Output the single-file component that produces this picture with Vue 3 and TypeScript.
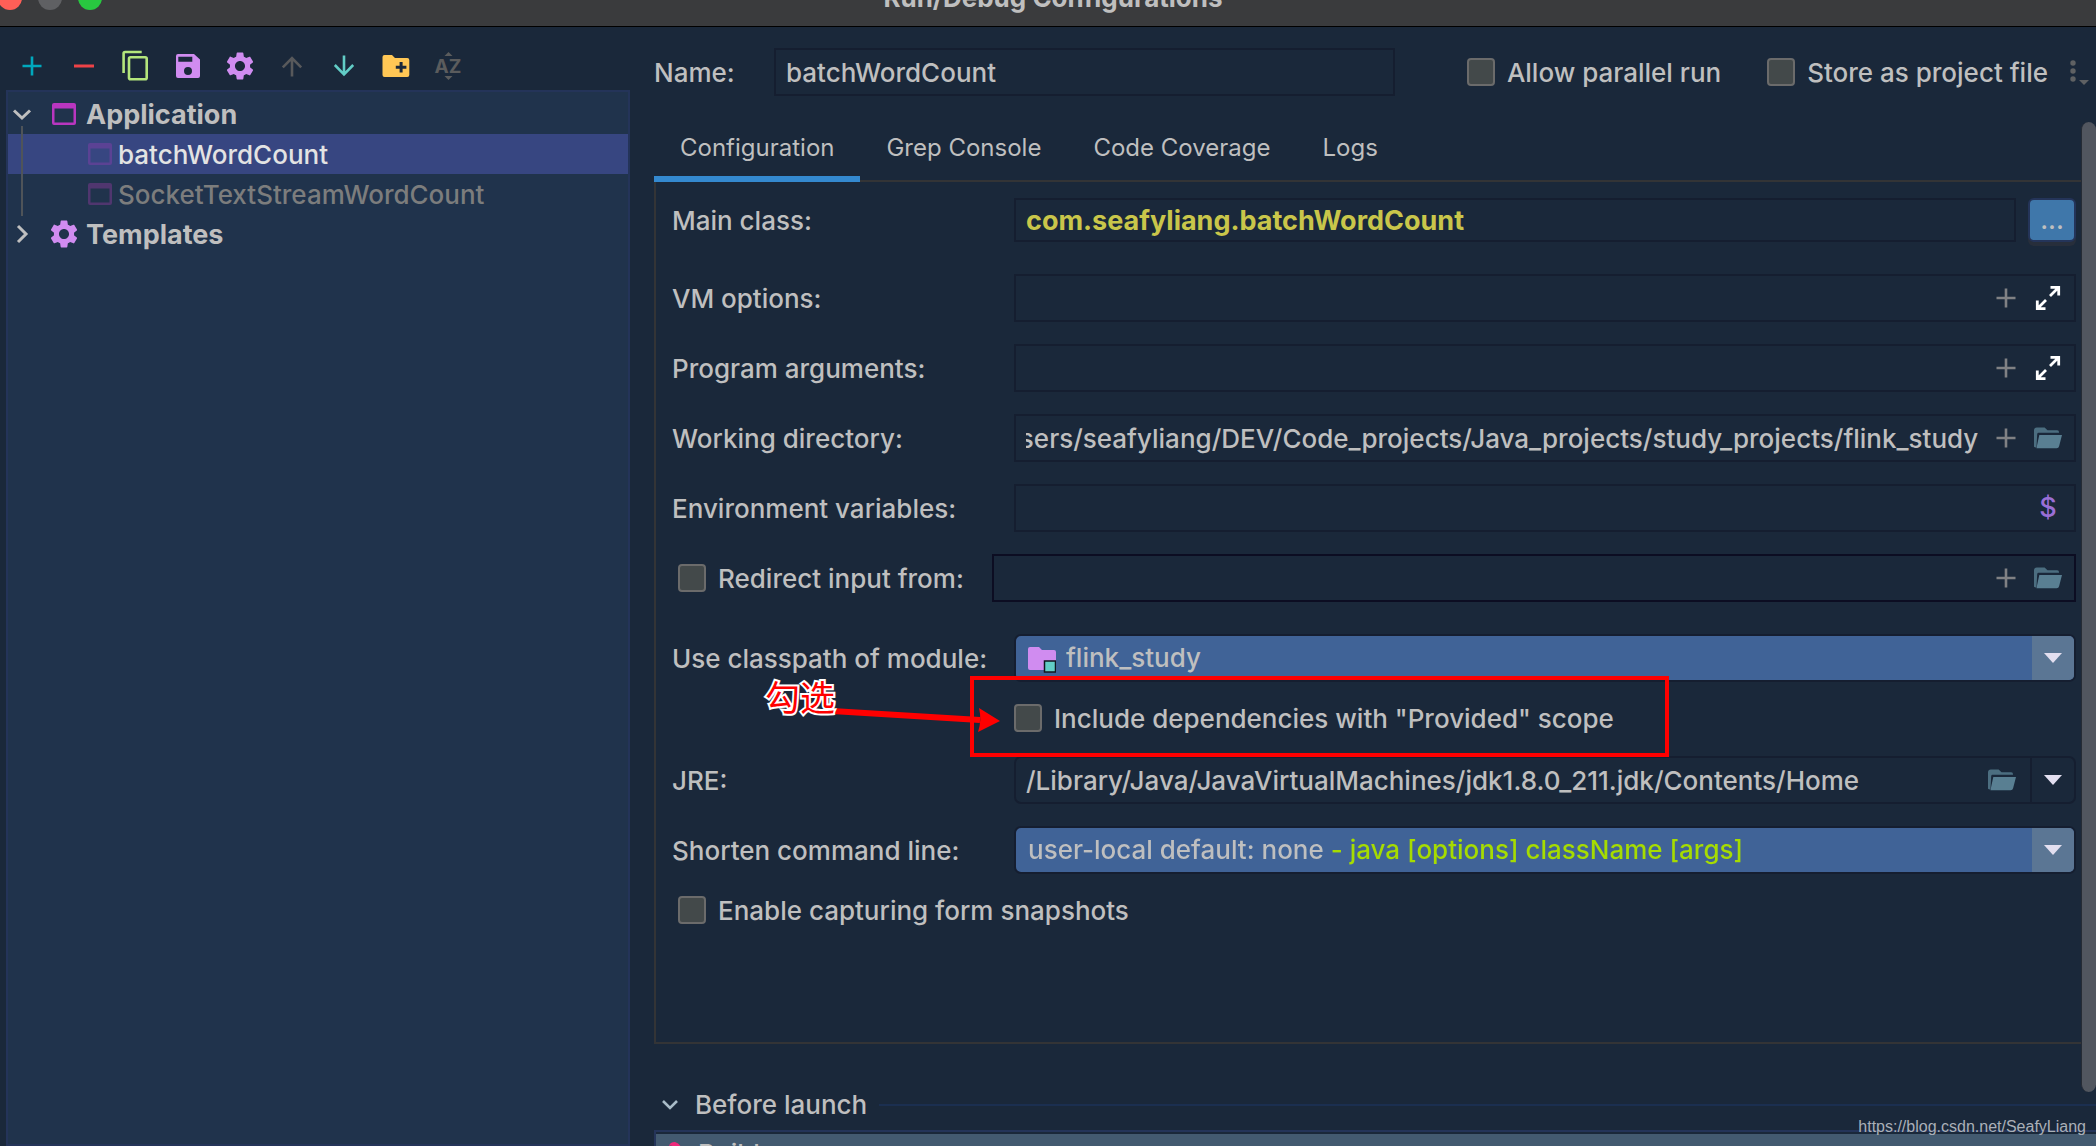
<script setup lang="ts">
import { onMounted, ref } from 'vue'

interface TreeItem {
  label: string
  kind: 'group' | 'child'
  icon: 'window' | 'gear'
  open?: boolean
  selected?: boolean
  faded?: boolean
}

const tree: TreeItem[] = [
  { label: 'Application', kind: 'group', icon: 'window', open: true },
  { label: 'batchWordCount', kind: 'child', icon: 'window', selected: true },
  { label: 'SocketTextStreamWordCount', kind: 'child', icon: 'window', faded: true },
  { label: 'Templates', kind: 'group', icon: 'gear', open: false },
]

const tabs = ['Configuration', 'Grep Console', 'Code Coverage', 'Logs']
const activeTab = ref('Configuration')

const name = ref('batchWordCount')
const mainClass = ref('com.seafyliang.batchWordCount')
const vmOptions = ref('')
const programArgs = ref('')
const workingDir = ref('/Users/seafyliang/DEV/Code_projects/Java_projects/study_projects/flink_study')
const envVars = ref('')
const redirectFile = ref('')
const jre = ref('/Library/Java/JavaVirtualMachines/jdk1.8.0_211.jdk/Contents/Home')
const workingDirInput = ref<HTMLInputElement | null>(null)

const gearPath =
  'M19.14 12.94c.04-.3.06-.61.06-.94 0-.32-.02-.64-.07-.94l2.03-1.58c.18-.14.23-.41.12-.61l-1.92-3.32c-.12-.22-.37-.29-.59-.22l-2.39.96c-.5-.38-1.03-.7-1.62-.94l-.36-2.54c-.04-.24-.24-.41-.48-.41h-3.84c-.24 0-.43.17-.47.41l-.36 2.54c-.59.24-1.13.57-1.62.94l-2.39-.96c-.22-.08-.47 0-.59.22L2.74 8.87c-.12.21-.08.47.12.61l2.03 1.58c-.05.3-.09.63-.09.94s.02.64.07.94l-2.03 1.58c-.18.14-.23.41-.12.61l1.92 3.32c.12.22.37.29.59.22l2.39-.96c.5.38 1.03.7 1.62.94l.36 2.54c.05.24.24.41.48.41h3.84c.24 0 .44-.17.47-.41l.36-2.54c.59-.24 1.13-.56 1.62-.94l2.39.96c.22.08.47 0 .59-.22l1.92-3.32c.12-.22.07-.47-.12-.61l-2.01-1.58zM12 15.6c-1.98 0-3.6-1.62-3.6-3.6s1.62-3.6 3.6-3.6 3.6 1.62 3.6 3.6-1.62 3.6-3.6 3.6z'
const folderBack = 'M0 20V3Q0 0 3 0H11L14 3H24Q26 3 26 5.5H4.500Q3.500 5.500 3.300 7L2.600 20Q2 21.500 0 20Z'
const folderFront = 'M5.500 8H29L26 19.500Q25.500 21.500 23.500 21.500H2.500Z'
const expandPath = 'M16.500 3.300H24.700V11.500M24.500 3.500L16 12M3.300 16.500V24.700H11.500M3.500 24.500L12 16'

// The end of a long path is the part worth seeing.
onMounted(() => {
  const el = workingDirInput.value
  if (el) el.scrollLeft = el.scrollWidth
})
</script>

<template>
  <div class="dialog">
    <header class="titlebar">
      <div class="lights"><i class="red"></i><i class="grey"></i><i class="green"></i></div>
      <h1>Run/Debug Configurations</h1>
    </header>

    <div class="body">
      <aside class="side">
        <div class="toolbar">
          <button aria-label="Add"><svg viewBox="0 0 32 32" stroke="#00a8bd" stroke-width="2.6"><path d="M6.500 16h19M16 6.500v19" /></svg></button>
          <button aria-label="Remove"><svg viewBox="0 0 32 32" stroke="#ee4247" stroke-width="3"><path d="M6 16h20" /></svg></button>
          <button aria-label="Copy"><svg viewBox="0 0 32 32" stroke="#b4e67c" stroke-width="2.6" fill="none"><rect x="9" y="7.300" width="17.700" height="22" rx="1.500" /><path d="M3.600 23V3.500Q3.600 2 5.100 2H21.700" /></svg></button>
          <button aria-label="Save"><svg viewBox="0 0 32 32" fill="#d08cf0" fill-rule="evenodd"><path d="M6 4H22L28 9.500V26a2 2 0 0 1-2 2H6a2 2 0 0 1-2-2V6a2 2 0 0 1 2-2ZM6.300 6.700V11.700H20.300V6.700ZM16 17a4 4 0 1 0 0 8a4 4 0 1 0 0-8Z" /></svg></button>
          <button aria-label="Edit templates"><svg class="gear" viewBox="2 2 20 20" fill="#d08cf0"><path :d="gearPath" /></svg></button>
          <button aria-label="Move up"><svg viewBox="0 0 32 32" stroke="#58595b" stroke-width="2.6" fill="none"><path d="M16 26.500V8M6.800 17.300L16 8L25.200 17.300" /></svg></button>
          <button aria-label="Move down"><svg viewBox="0 0 32 32" stroke="#62cdc6" stroke-width="2.6" fill="none"><path d="M16 5.500V24M6.800 15L16 24.300L25.200 15" /></svg></button>
          <button aria-label="New folder"><svg viewBox="0 0 32 32"><path fill="#ffc755" d="M4.500 5H12L15 8H27.300a2 2 0 0 1 2 2V25a2 2 0 0 1-2 2H4.500a2 2 0 0 1-2-2V7a2 2 0 0 1 2-2Z" /><path stroke="#1a283a" stroke-width="3" d="M15.800 17.300h10.600M21.100 12v10.600" /></svg></button>
          <button aria-label="Sort"><svg viewBox="0 0 32 32" fill="#5b5c5d"><path d="M12.500 6L16.500 2L20.500 6ZM12.500 26L16.500 30L20.500 26Z" /><text x="16" y="23" text-anchor="middle" font-size="19" font-weight="700">AZ</text></svg></button>
        </div>

        <ul class="tree">
          <li v-for="item in tree" :key="item.label" :class="[item.kind, { selected: item.selected, faded: item.faded }]">
            <svg v-if="item.kind === 'group'" class="chev" viewBox="0 0 28 28">
              <path v-if="item.open" d="M6 10.500L14 18L22 10.500" />
              <path v-else d="M10 6L18 14L10 22" />
            </svg>
            <svg v-if="item.icon === 'window'" class="ico win" viewBox="0 0 28 28"><path fill-rule="evenodd" d="M4 3H24a2 2 0 0 1 2 2V23a2 2 0 0 1-2 2H4a2 2 0 0 1-2-2V5a2 2 0 0 1 2-2ZM4.500 8.500V22.500H23.500V8.500Z" /></svg>
            <svg v-else class="ico" viewBox="2 2 20 20" fill="#d08cf0"><path :d="gearPath" /></svg>
            <span>{{ item.label }}</span>
          </li>
        </ul>
      </aside>

      <main class="main">
        <div class="name-row">
          <label for="name">Name:</label>
          <div class="field name-field"><input id="name" v-model="name" type="text" /></div>
          <label class="check"><input type="checkbox" /><span>Allow parallel run</span></label>
          <label class="check store"><input type="checkbox" /><span>Store as project file</span></label>
          <button class="more" aria-label="More options"><svg viewBox="0 0 22 28" fill="#5f6163"><circle cx="5" cy="5" r="2.700" /><circle cx="5" cy="13" r="2.700" /><circle cx="5" cy="21" r="2.700" /><path d="M11 22H21L16 27Z" /></svg></button>
        </div>

        <nav class="tabs">
          <button v-for="tab in tabs" :key="tab" :class="{ active: tab === activeTab }" @click="activeTab = tab">{{ tab }}</button>
        </nav>

        <section class="panel">
          <div class="row first">
            <label for="main-class">Main class:</label>
            <div class="field short"><input id="main-class" v-model="mainClass" class="strong" type="text" /></div>
            <button class="browse">...</button>
          </div>
          <div class="row">
            <label for="vm">VM options:</label>
            <div class="field">
              <input id="vm" v-model="vmOptions" type="text" />
              <button aria-label="Insert macro"><svg class="plus" viewBox="0 0 28 28"><path d="M4.500 14h19M14 4.500v19" /></svg></button>
              <button aria-label="Expand"><svg class="expand" viewBox="0 0 28 28"><path :d="expandPath" /></svg></button>
            </div>
          </div>
          <div class="row">
            <label for="args">Program arguments:</label>
            <div class="field">
              <input id="args" v-model="programArgs" type="text" />
              <button aria-label="Insert macro"><svg class="plus" viewBox="0 0 28 28"><path d="M4.500 14h19M14 4.500v19" /></svg></button>
              <button aria-label="Expand"><svg class="expand" viewBox="0 0 28 28"><path :d="expandPath" /></svg></button>
            </div>
          </div>
          <div class="row">
            <label for="dir">Working directory:</label>
            <div class="field">
              <input id="dir" ref="workingDirInput" v-model="workingDir" type="text" />
              <button aria-label="Insert macro"><svg class="plus" viewBox="0 0 28 28"><path d="M4.500 14h19M14 4.500v19" /></svg></button>
              <button aria-label="Browse"><svg class="folder" viewBox="0 -3 29 28"><path :d="folderBack" opacity="0.8" /><path :d="folderFront" /></svg></button>
            </div>
          </div>
          <div class="row">
            <label for="env">Environment variables:</label>
            <div class="field">
              <input id="env" v-model="envVars" type="text" />
              <button class="dollar" aria-label="Edit variables">$</button>
            </div>
          </div>
          <div class="row redirect">
            <label class="check"><input type="checkbox" /><span>Redirect input from:</span></label>
            <div class="field">
              <input v-model="redirectFile" type="text" aria-label="Redirect input file" />
              <button aria-label="Insert macro"><svg class="plus" viewBox="0 0 28 28"><path d="M4.500 14h19M14 4.500v19" /></svg></button>
              <button aria-label="Browse"><svg class="folder" viewBox="0 -3 29 28"><path :d="folderBack" opacity="0.8" /><path :d="folderFront" /></svg></button>
            </div>
          </div>
          <div class="row module">
            <label for="module">Use classpath of module:</label>
            <div class="combo">
              <svg class="module-icon" viewBox="0 0 28 26"><path fill="#d08cf0" d="M2 0H11L14 3H26a2 2 0 0 1 2 2V21a2 2 0 0 1-2 2H2a2 2 0 0 1-2-2V2a2 2 0 0 1 2-2Z" /><rect x="16.500" y="14" width="11" height="11" fill="#62cdc6" stroke="#10161f" stroke-width="1.500" /></svg>
              <select id="module" class="with-icon"><option>flink_study</option></select>
              <span class="arrow"></span>
            </div>
          </div>
          <div class="row include">
            <div class="include-box">
              <label class="check"><input type="checkbox" /><span>Include dependencies with "Provided" scope</span></label>
              <div class="mark-frame"></div>
              <svg class="mark-arrow" viewBox="0 0 170 40"><path stroke="#f00" stroke-width="6" d="M2 16L150 25" /><path fill="#f00" d="M149 13L170 26L148 37Q152 25 149 13Z" /></svg>
              <span class="mark-text">勾选</span>
            </div>
          </div>
          <div class="row">
            <label for="jre">JRE:</label>
            <div class="field editable">
              <input id="jre" v-model="jre" type="text" />
              <button aria-label="Browse"><svg class="folder" viewBox="0 -3 29 28"><path :d="folderBack" opacity="0.8" /><path :d="folderFront" /></svg></button>
              <button class="arrow" aria-label="Choose JRE"></button>
            </div>
          </div>
          <div class="row">
            <label for="shorten">Shorten command line:</label>
            <div class="combo">
              <select id="shorten" class="two-tone"><option>user-local default: none - java [options] className [args]</option></select>
              <span class="arrow"></span>
            </div>
          </div>
          <div class="row">
            <label class="check"><input type="checkbox" /><span>Enable capturing form snapshots</span></label>
          </div>
        </section>

        <section class="launch">
          <h2>
            <svg viewBox="0 0 16 12"><path d="M1 2L8 9L15 2" /></svg>
            <span>Before launch</span>
          </h2>
          <ul>
            <li><svg viewBox="0 0 24 24"><path d="M1 4Q2 0 7 0Q11 1 13 5L24 17L20 22L9 9Q5 2 1 4Z" /></svg>Build</li>
          </ul>
        </section>
        <div class="scrollbar"></div>
      </main>
    </div>
    <span class="watermark">https://blog.csdn.net/SeafyLiang</span>
  </div>
</template>

<style>
body {
  margin: 0;
  background: #1a283a;
}
</style>

<style scoped>
.dialog {
  position: relative;
  display: flex;
  flex-direction: column;
  height: 100vh;
  overflow: hidden;
  background: #1a283a;
  color: #bfbfbf;
  font: 500 26px/32px Inter, "Liberation Sans", "Noto Sans CJK SC", sans-serif;
}
.dialog * {
  box-sizing: border-box;
}
button,
input,
select {
  margin: 0;
  padding: 0;
  border: 0;
  background: none;
  color: inherit;
  font: inherit;
  outline: none;
}
svg {
  display: block;
}
ul {
  margin: 0;
  padding: 0;
  list-style: none;
}

/* title bar, its upper half above the window's edge */
.titlebar {
  position: relative;
  flex: none;
  display: flex;
  align-items: center;
  justify-content: center;
  height: 57px;
  margin-top: -30px;
  padding-left: 10px;
  background: #3a3b3d;
  border-bottom: 1px solid #000;
}
.titlebar h1 {
  margin: 0;
  font-size: 26px;
  font-weight: 700;
}
.lights {
  position: absolute;
  left: -2px;
  display: flex;
  gap: 16px;
}
.lights i {
  width: 24px;
  height: 24px;
  border-radius: 50%;
}
.red { background: #ff5f57; }
.grey { background: #5f6063; }
.green { background: #28c840; }

.body {
  flex: 1;
  display: flex;
  min-height: 0;
}

/* left side */
.side {
  flex: none;
  display: flex;
  flex-direction: column;
  width: 630px;
  padding-left: 6px;
}
.toolbar {
  display: flex;
  height: 63px;
  padding-top: 15px;
}
.toolbar button {
  display: flex;
  align-items: center;
  justify-content: center;
  width: 52px;
  height: 48px;
}
.toolbar svg {
  width: 32px;
  height: 32px;
}
.toolbar .gear {
  width: 28px;
  height: 28px;
}
.tree {
  position: relative;
  flex: 1;
  padding-top: 2px;
  background: #20334c;
  border: 2px solid #243459;
}
.tree::after {
  content: "";
  position: absolute;
  left: 13px;
  top: 34px;
  width: 2px;
  height: 90px;
  background: #4f5459;
}
.tree li {
  display: flex;
  align-items: center;
  height: 40px;
}
.tree span,
.check span,
.name-row > label:first-child {
  padding-top: 2px;
}
.tree .group {
  gap: 8px;
  font-size: 27px;
  font-weight: 700;
}
.tree .child {
  gap: 4px;
  padding-left: 78px;
}
.chev {
  width: 28px;
  height: 28px;
  margin-right: 6px;
  fill: none;
  stroke: #bfbfbf;
  stroke-width: 3;
}
.ico {
  width: 28px;
  height: 28px;
}
.win {
  fill: #b936c0;
}
.selected {
  background: #374681;
  color: #e3e3e3;
}
.selected .win {
  fill: #5b4294;
}
.faded {
  color: #7c7d7d;
}
.faded .win {
  fill: #50366f;
}

/* right side */
.main {
  position: relative;
  flex: 1;
  min-width: 0;
  padding-left: 24px;
}
.name-row {
  display: flex;
  align-items: center;
  padding-top: 21px;
}
.name-row > label:first-child {
  width: 120px;
}
.name-field {
  margin-right: 72px;
}
.store {
  margin-left: 46px;
}
.more {
  width: 22px;
  margin: 0 6px 0 20px;
}
.more svg {
  width: 22px;
  height: 28px;
}
.check {
  display: flex;
  align-items: center;
  gap: 12px;
  height: 28px;
  white-space: nowrap;
}
.check input {
  appearance: none;
  width: 28px;
  height: 28px;
  background: #43494a;
  border: 2px solid #6b6b6b;
  border-radius: 4px;
}
.tabs {
  display: flex;
  margin-top: 26px;
  border-bottom: 2px solid #333436;
}
.tabs button {
  height: 60px;
  margin-bottom: -2px;
  padding: 0 26px 2px;
  border-bottom: 6px solid transparent;
  font-size: 24px;
  font-weight: 400;
}
.tabs .active {
  border-color: #3489cf;
}
.panel {
  display: flex;
  flex-direction: column;
  gap: 22px;
  padding: 16px 20px 118px 16px;
  border: solid #333436;
  border-width: 0 0 2px 2px;
}
.row {
  display: flex;
  align-items: center;
}
.row > label:not(.check) {
  flex: none;
  width: 342px;
  padding-top: 2px;
}
.row > .check {
  padding-left: 6px;
}
.first {
  margin-bottom: 10px;
}
.field {
  flex: 1;
  display: flex;
  align-items: center;
  gap: 14px;
  min-width: 0;
  height: 48px;
  padding: 0 12px 0 10px;
  border: 2px solid #151e30;
}
.short {
  height: 44px;
}
.field input {
  flex: 1;
  min-width: 0;
  height: 40px;
}
.field .strong {
  color: #c9c64a;
  font-size: 27px;
  font-weight: 700;
}
.field button {
  flex: none;
  width: 28px;
  height: 28px;
}
.field svg {
  width: 28px;
  height: 28px;
}
.plus {
  stroke: #808184;
  stroke-width: 2.6;
}
.expand {
  fill: none;
  stroke: #fff;
  stroke-width: 2.8;
}
.folder {
  fill: #597f92;
}
.field .dollar {
  color: #9a6fd6;
  font-size: 27px;
  line-height: 28px;
}
.browse {
  width: 48px;
  height: 44px;
  margin-left: 12px;
  background: #3f77aa;
  border: 2px solid #243459;
  border-radius: 6px;
  box-shadow: 0 4px 0 #272e3b;
}
.redirect > label.check {
  flex: none;
  width: 320px;
}
.redirect .field {
  border-color: #0c0d22;
}
.module {
  margin-top: 10px;
}
.combo {
  position: relative;
  flex: 1;
  min-width: 0;
  height: 48px;
  background: #406397;
  border: 2px solid #151e30;
  border-radius: 7px;
  overflow: hidden;
}
.combo select {
  appearance: none;
  width: 100%;
  height: 44px;
  padding: 0 54px 0 12px;
}
.combo .with-icon {
  padding-left: 50px;
}
.combo .two-tone {
  background: linear-gradient(90deg, #bfbfbf 310px, #a6dc00 310px);
  background-clip: text;
  color: transparent;
}
.module-icon {
  position: absolute;
  left: 12px;
  top: 11px;
  width: 28px;
  height: 26px;
}
.arrow {
  display: flex;
  align-items: center;
  justify-content: center;
}
.arrow::after {
  content: "";
  border: solid transparent;
  border-width: 10px 9px 0;
  border-top-color: #e3dff0;
}
.combo .arrow {
  position: absolute;
  right: 0;
  top: 0;
  width: 42px;
  height: 44px;
  background: #5b7694;
  pointer-events: none;
}
.editable {
  padding-right: 0;
  border-radius: 7px;
}
.editable .arrow {
  width: 44px;
  height: 44px;
  border-left: 2px solid #151e30;
}
.include {
  padding-left: 342px;
  margin-bottom: 2px;
}

/* red notes drawn over the form */
.include-box {
  position: relative;
}
.mark-frame {
  position: absolute;
  left: -44px;
  top: -28px;
  width: 699px;
  height: 81px;
  border: 4px solid #f00;
  pointer-events: none;
}
.mark-text {
  position: absolute;
  left: -249px;
  top: -30px;
  color: #f00;
  font: 35px/44px "Noto Sans CJK SC", sans-serif;
  white-space: nowrap;
  -webkit-text-stroke: 4px #fff;
  paint-order: stroke fill;
}
.mark-arrow {
  position: absolute;
  left: -184px;
  top: -9px;
  width: 170px;
  height: 40px;
  pointer-events: none;
}

.launch {
  margin-top: 36px;
}
.launch h2 {
  display: flex;
  align-items: center;
  height: 50px;
  margin: 0;
  padding-left: 8px;
  font-size: 26px;
  font-weight: 500;
}
.launch h2 svg {
  width: 16px;
  height: 12px;
  margin-right: 17px;
  fill: none;
  stroke: #a9bcc8;
  stroke-width: 2.6;
}
.launch h2::after {
  content: "";
  flex: 1;
  height: 2px;
  margin-left: 12px;
  background: #1b2f50;
}
.launch ul {
  padding-top: 2px;
  border: solid #243459;
  border-width: 2px 0 0 2px;
}
.launch li {
  display: flex;
  align-items: center;
  gap: 6px;
  height: 40px;
  padding-left: 12px;
  background: #435a70;
}
.launch li svg {
  width: 24px;
  height: 24px;
  fill: #f0287a;
}
.scrollbar {
  position: absolute;
  right: 0;
  top: 95px;
  bottom: 54px;
  width: 15px;
  background: #51565f;
  border-left: 1px solid #252b35;
  border-radius: 8px;
}
.watermark {
  position: absolute;
  right: 10px;
  bottom: 9px;
  color: #aab0b8;
  font: 16px/20px "Liberation Sans", Arial, sans-serif;
}
</style>
